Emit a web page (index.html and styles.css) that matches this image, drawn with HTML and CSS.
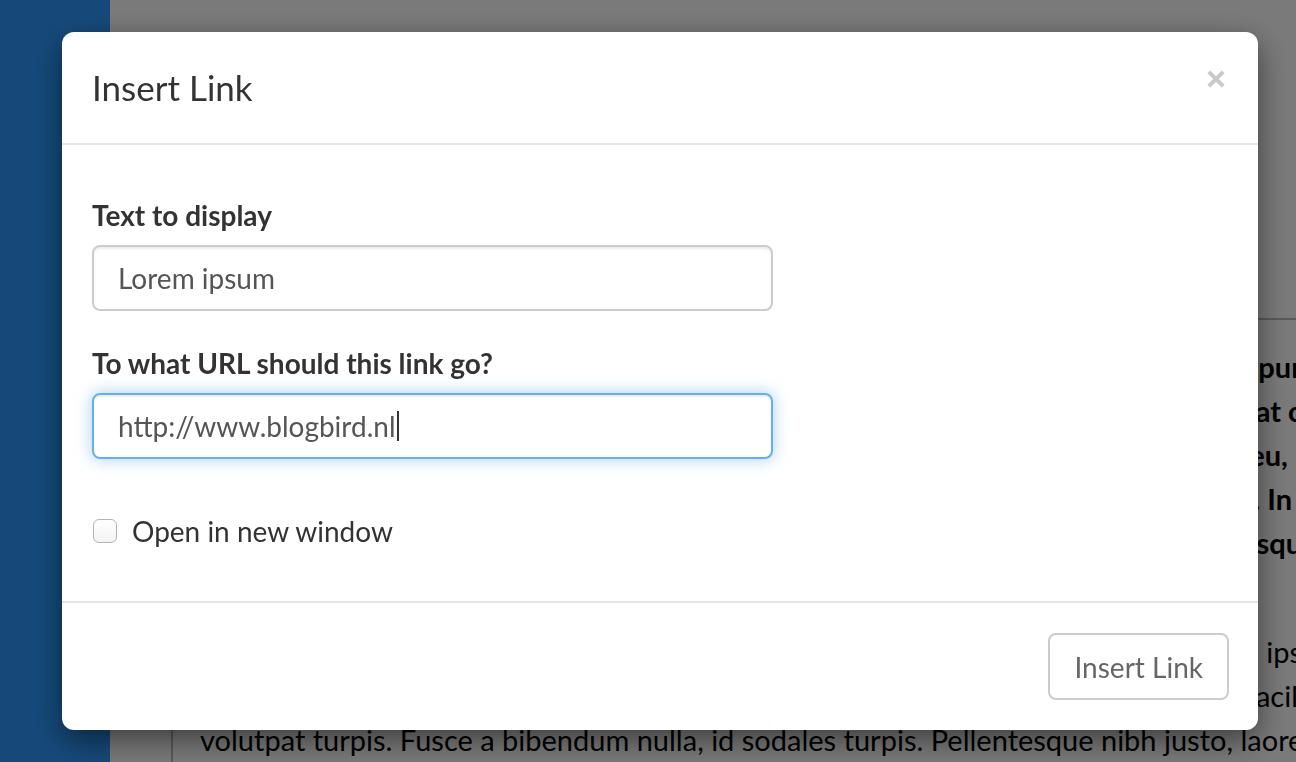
FILE: index.html
```html
<!DOCTYPE html>
<html lang="en">
<head>
<meta charset="utf-8">
<title>Insert Link</title>
<link rel="stylesheet" href="styles.css">
</head>
<body>
<div class="app">
  <aside class="sidebar"></aside>
  <main class="main">
    <div class="toolbar"></div>
    <div class="workspace">
      <div class="gutter"></div>
      <article class="editor">
        <p class="para bold">
          <span class="line end">Lorem ipsum dolor sit amet, consectetur adipiscing elit. Vivamus pur</span>
          <span class="line end">sollicitudin, quam nulla tincidunt magna, vitae volutpat c</span>
          <span class="line end">Aliquam erat volutpat. Integer dictum ligula nec lectus eu,&nbsp;&nbsp;</span>
          <span class="line end far">Suspendisse potenti, sed convallis tortor. In</span>
          <span class="line end">consequat. Pellentesqu</span>
        </p>
        <p class="para">
          <span class="line end">Curabitur dictum mauris non ante. Lorem ips</span>
          <span class="line end near">Donec vitae tellus. Nulla facil</span>
          <span class="line">volutpat turpis. Fusce a bibendum nulla, id sodales turpis. Pellentesque nibh justo, laoreet at</span>
        </p>
      </article>
    </div>
  </main>
</div>

<div class="backdrop"></div>

<div class="modal">
  <div class="dialog">
    <div class="header">
      <h4 class="title">Insert Link</h4>
      <button class="close" aria-label="Close">
        <svg width="18" height="18" viewBox="0 0 18 18"><path d="M1.8 1.8L16.2 16.2M16.2 1.8L1.8 16.2" stroke="#c9c9c9" stroke-width="4" fill="none"/></svg>
      </button>
    </div>
    <div class="body">
      <div class="group">
        <label class="label">Text to display</label>
        <div class="field">Lorem ipsum</div>
      </div>
      <div class="group">
        <label class="label">To what URL should this link go?</label>
        <div class="field focus">http://www.blogbird.nl<span class="caret"></span></div>
      </div>
      <div class="check">
        <span class="box"></span>
        <span>Open in new window</span>
      </div>
    </div>
    <div class="footer">
      <button class="btn">Insert Link</button>
    </div>
  </div>
</div>
</body>
</html>
```

FILE: styles.css
```css
html, body {
  margin: 0;
  height: 100%;
  overflow: hidden;
}

body {
  font-family: Lato, "Open Sans", sans-serif;
  background: #fff;
  color: #000;
}

.app {
  display: flex;
  height: 762px;
}

.sidebar {
  width: 110px;
  flex: none;
  background: #2e9aff;
}

.main {
  flex: 1;
  min-width: 0;
  display: flex;
  flex-direction: column;
}

.toolbar {
  height: 318px;
  flex: none;
  border-bottom: 2px solid #bcbcbc;
}

.workspace {
  flex: 1;
  display: flex;
  min-height: 0;
}

.gutter {
  width: 61px;
  flex: none;
}

.editor {
  flex: 1;
  min-width: 0;
  border-left: 2px solid #bcbcbc;
  padding: 25px 0 0 27px;
  overflow: hidden;
  font-size: 29px;
  line-height: 44px;
}

.para {
  margin: 0 0 65px;
}

.para.bold {
  font-weight: 700;
}

.line {
  display: block;
  white-space: nowrap;
}

.line.end {
  text-align: right;
  margin-right: -6px;
}

.line.end.far {
  margin-right: 4px;
}

.line.end.near {
  margin-right: -2px;
}

.backdrop {
  position: fixed;
  inset: 0;
  background: rgba(0, 0, 0, 0.52);
}

.modal {
  position: fixed;
  inset: 0;
  padding: 32px 38px 0 62px;
}

.dialog {
  background: #fff;
  border-radius: 12px;
  box-shadow: 0 10px 30px rgba(0, 0, 0, 0.5);
  color: #333;
}

.header {
  display: flex;
  justify-content: space-between;
  align-items: flex-start;
  padding: 30px;
  border-bottom: 2px solid #e5e5e5;
}

.title {
  margin: 0;
  font-size: 35px;
  font-weight: 400;
  line-height: 51px;
  color: #333;
}

.close {
  display: block;
  width: 18px;
  height: 18px;
  padding: 0;
  margin: 8px 3px 0 0;
  border: 0;
  background: none;
}

.close svg {
  display: block;
}

.body {
  display: flex;
  flex-direction: column;
  padding: 50px 30px 30px;
}

.group {
  margin-bottom: 32px;
}

.label {
  display: block;
  font-size: 28px;
  font-weight: 700;
  line-height: 40px;
  margin-bottom: 10px;
  color: #333;
}

.field {
  box-sizing: border-box;
  width: 681px;
  height: 66px;
  display: flex;
  align-items: center;
  padding: 0 24px;
  border: 2px solid #ccc;
  border-radius: 8px;
  font-size: 28px;
  color: #555;
  box-shadow: inset 0 2px 2px rgba(0, 0, 0, 0.075);
}

.field.focus {
  border-color: #66afe9;
  box-shadow: inset 0 2px 2px rgba(0, 0, 0, 0.075), 0 0 16px rgba(102, 175, 233, 0.6);
}

.caret {
  width: 2px;
  height: 30px;
  margin-left: 1px;
  background: #333;
}

.check {
  display: flex;
  align-items: center;
  gap: 15px;
  margin: 20px 0;
  font-size: 28px;
  line-height: 40px;
  color: #333;
}

.box {
  box-sizing: border-box;
  width: 24px;
  height: 24px;
  margin-left: 1px;
  border: 1px solid #b3b3b3;
  border-radius: 6px;
  background: linear-gradient(#ffffff, #f3f3f3);
}

.footer {
  display: flex;
  justify-content: flex-end;
  padding: 30px;
  border-top: 2px solid #e5e5e5;
}

.btn {
  height: 67px;
  padding: 0 24px;
  margin-right: -1px;
  border: 2px solid #ccc;
  border-radius: 8px;
  background: #fff;
  font-family: inherit;
  font-size: 28px;
  color: #666;
}
```
